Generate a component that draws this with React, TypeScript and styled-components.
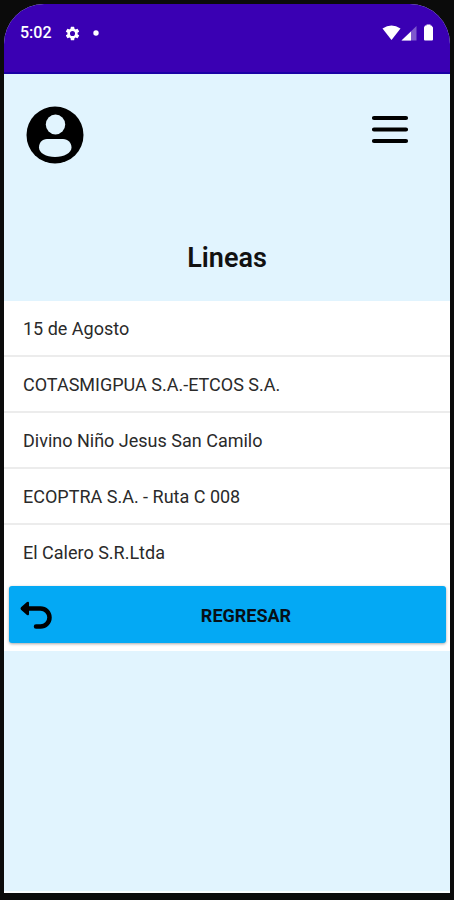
import React from "react";
import styled, { createGlobalStyle } from "styled-components";

const GlobalStyle = createGlobalStyle`
  *, *::before, *::after { box-sizing: border-box; }
  body {
    margin: 0;
    background: #0b0b0b;
    font-family: Roboto, "Liberation Sans", sans-serif;
    color: #111;
  }
`;

const Device = styled.div`
  display: flex;
  min-height: 100vh;
  padding: 4px 4px 7px;
`;

const Screen = styled.div`
  display: flex;
  flex: 1;
  flex-direction: column;
  min-width: 0;
  overflow: hidden;
  border-radius: 40px 40px 0 0;
  background: #e1f4fe;
  border-bottom: 2px solid #fafdff;
`;

const StatusBar = styled.div`
  display: flex;
  justify-content: space-between;
  height: 70px;
  padding: 19px 15px 0 16px;
  background: #3a00b3;
  border-bottom: 2px solid #1a00a5;
  color: #fff;
`;

const StatusGroup = styled.div<{ $gap: number }>`
  display: flex;
  align-items: center;
  gap: ${({ $gap }) => $gap}px;
  height: 20px;
`;

const Clock = styled.span`
  font-size: 16px;
  font-weight: 500;
  line-height: 20px;
`;

const Header = styled.header`
  display: flex;
  align-items: flex-start;
  justify-content: space-between;
  padding: 32px 41px 0 22px;
`;

const IconButton = styled.button`
  display: flex;
  padding: 0;
  border: 0;
  background: none;
  color: #000;
  cursor: pointer;
`;

const MenuButton = styled(IconButton)`
  padding-top: 8px;
`;

const Title = styled.h1`
  margin: 0;
  padding: 78px 16px 27px;
  font-size: 27px;
  font-weight: 600;
  line-height: 32px;
  text-align: center;
`;

const Panel = styled.section`
  padding-bottom: 8px;
  background: #fff;
`;

const Lines = styled.ul`
  margin: 0;
  padding: 0 0 5px;
  list-style: none;
`;

const Line = styled.li`
  height: 56px;
  padding: 2px 19px 0;
  border-bottom: 2px solid #ececec;
  font-size: 18px;
  font-weight: 400;
  line-height: 52px;
  color: #2a2a2a;

  &:last-child {
    border-bottom-color: transparent;
  }
`;

const BackButton = styled.button`
  display: flex;
  align-items: center;
  width: calc(100% - 9px);
  height: 57px;
  margin: 0 4px 0 5px;
  padding: 0 8px 0 11px;
  border: 0;
  border-radius: 3px;
  background: #04a9f4;
  box-shadow: 0 1px 3px rgba(0, 0, 0, 0.35);
  color: #071018;
  font-family: inherit;
  font-size: 18px;
  font-weight: 700;
  cursor: pointer;
`;

const BackLabel = styled.span`
  flex: 1;
  padding-top: 2px;
  text-align: center;
`;

const lines = [
  "15 de Agosto",
  "COTASMIGPUA S.A.-ETCOS S.A.",
  "Divino Niño Jesus San Camilo",
  "ECOPTRA S.A. - Ruta C 008",
  "El Calero S.R.Ltda",
];

const GearIcon = () => (
  <svg width="17" height="17" viewBox="0 0 24 24" fill="currentColor" aria-hidden="true">
    <path d="M19.14 12.94c.04-.3.06-.61.06-.94s-.02-.64-.07-.94l2.03-1.58a.49.49 0 0 0 .12-.61l-1.92-3.32a.49.49 0 0 0-.59-.22l-2.39.96a7 7 0 0 0-1.62-.94l-.36-2.54a.48.48 0 0 0-.48-.41h-3.84a.47.47 0 0 0-.47.41l-.36 2.54c-.59.24-1.13.57-1.62.94l-2.39-.96a.48.48 0 0 0-.59.22L2.74 8.87a.48.48 0 0 0 .12.61l2.03 1.58a6 6 0 0 0 0 1.88l-2.03 1.58a.49.49 0 0 0-.12.61l1.92 3.32c.12.22.37.29.59.22l2.39-.96c.5.38 1.03.7 1.62.94l.36 2.54c.05.24.24.41.48.41h3.84c.24 0 .44-.17.47-.41l.36-2.54a7 7 0 0 0 1.62-.94l2.39.96c.22.08.47 0 .59-.22l1.92-3.32a.47.47 0 0 0-.12-.61zM12 15.6a3.6 3.6 0 1 1 0-7.2 3.6 3.6 0 0 1 0 7.2z" />
  </svg>
);

const DotIcon = () => (
  <svg width="6" height="6" viewBox="0 0 6 6" fill="currentColor" aria-hidden="true">
    <circle cx="3" cy="3" r="2.7" />
  </svg>
);

const SystemIcons = () => (
  <svg width="53" height="18" viewBox="0 0 53 18" fill="#fff" aria-hidden="true">
    <path d="M.5 4.4Q9.500 -1.200 18.500 4.400L9.500 16z" />
    <path d="M34.500 2V16.500H19.500z" opacity=".35" />
    <path d="M29 7.400V16.500H19.500z" />
    <path d="M43 1.500h1.500V.5h4v1h1l1.500 2v12q0 1-1 1h-7q-1 0-1-1v-12z" />
  </svg>
);

const AccountIcon = () => (
  <svg width="58" height="58" viewBox="0 0 58 58" aria-hidden="true">
    <circle cx="29" cy="29" r="28.500" fill="#000" />
    <ellipse cx="29.500" cy="18.500" rx="9.700" ry="10" fill="#e1f4fe" />
    <path d="M21 33h16c5 0 8.500 4 8.500 8.500C45.500 47 38 51 29 51s-16-4-16-9.500C13 37 16 33 21 33z" fill="#e1f4fe" />
  </svg>
);

const MenuIcon = () => (
  <svg width="38" height="30" viewBox="0 0 38 30" stroke="#000" strokeWidth="4.200" strokeLinecap="round" aria-hidden="true">
    <path d="M3 4h32M3 15.500h32M3 27h32" />
  </svg>
);

const ReturnIcon = () => (
  <svg width="34" height="30" viewBox="0 0 34 30" aria-hidden="true">
    <path d="M6 8.500h14.500a9 9 0 0 1 0 18H16" fill="none" stroke="#000" strokeWidth="4.500" strokeLinecap="round" />
    <path d="M1 7.300 7 2q2-1 2 1v11q0 2-2 1L1 9.700q-1-1.200 0-2.400z" fill="#000" />
  </svg>
);

export default function App() {
  return (
    <>
      <GlobalStyle />
      <Device>
        <Screen>
          <StatusBar>
            <StatusGroup $gap={12}>
              <Clock>5:02</Clock>
              <GearIcon />
              <DotIcon />
            </StatusGroup>
            <StatusGroup $gap={0}>
              <SystemIcons />
            </StatusGroup>
          </StatusBar>
          <Header>
            <IconButton type="button" aria-label="Cuenta">
              <AccountIcon />
            </IconButton>
            <MenuButton type="button" aria-label="Menú">
              <MenuIcon />
            </MenuButton>
          </Header>
          <main>
            <Title>Lineas</Title>
            <Panel>
              <Lines>
                {lines.map((line) => (
                  <Line key={line}>{line}</Line>
                ))}
              </Lines>
              <BackButton type="button">
                <ReturnIcon />
                <BackLabel>REGRESAR</BackLabel>
              </BackButton>
            </Panel>
          </main>
        </Screen>
      </Device>
    </>
  );
}
